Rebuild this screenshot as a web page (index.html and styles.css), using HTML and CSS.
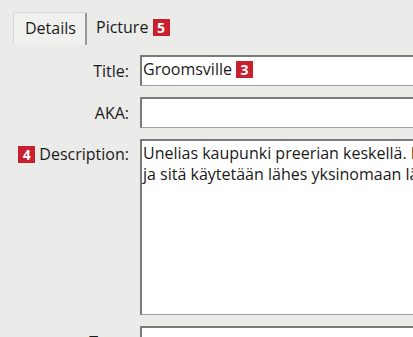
FILE: index.html
```html
<!DOCTYPE html>
<html lang="en">
<head>
  <meta charset="UTF-8">
  <title>Location Details</title>
  <link rel="stylesheet" href="styles.css">
</head>
<body>
  <div class="window">
    <div class="tabs">
      <div class="tab active">Details</div>
      <div class="tab">Picture <span class="badge">5</span></div>
    </div>
    <div class="form">
      <label class="lbl">Title:</label>
      <div class="field">Groomsville <span class="badge">3</span></div>

      <label class="lbl">AKA:</label>
      <div class="field"></div>

      <label class="lbl top"><span class="badge">4</span> Description:</label>
      <div class="field area">Unelias kaupunki preerian keskellä. Kaupunki on rakennettu rautatien varteen<br>ja sitä käytetään lähes yksinomaan lähtöpisteenä</div>

      <label class="lbl">Type:</label>
      <div class="field"></div>
    </div>
  </div>
</body>
</html>
```

FILE: styles.css
```css
* { margin: 0; padding: 0; box-sizing: border-box; }
body { font-family: "Open Sans", "Noto Sans", sans-serif; font-size: 16px; color: #1a1a1a; background: #ebebea; overflow: hidden; }
.window { width: 413px; height: 337px; overflow: hidden; }
.tabs { display: flex; align-items: flex-end; padding: 12px 0 0 13px; height: 45px; }
.tab { height: 33px; padding: 4px 8px 0 9px; white-space: nowrap; }
.tab.active { background: #f0f0ef; border: 1px solid #d6d6d5; border-bottom: none; border-right: 2px solid #9a9a9a; border-radius: 2px 2px 0 0; width: 74px; padding-left: 11px; }
.badge { display: inline-block; background: #c8202f; color: #fff; font-weight: bold; font-size: 14px; line-height: 17px; width: 17px; height: 17px; text-align: center; vertical-align: 0; }
.form { display: grid; grid-template-columns: 129px 400px; column-gap: 11px; row-gap: 11px; margin-top: 10px; }
.lbl { text-align: right; align-self: center; white-space: nowrap; }
.lbl.top { align-self: start; padding-top: 4px; }
.field { height: 31px; background: #fff; border: 1px solid #a0a0a0; border-top: 2px solid #7a7a7a; border-left: 2px solid #7a7a7a; padding: 1px 0 0 1px; white-space: nowrap; }
.field.area { height: 176px; line-height: 21px; padding-top: 2px; }
```
